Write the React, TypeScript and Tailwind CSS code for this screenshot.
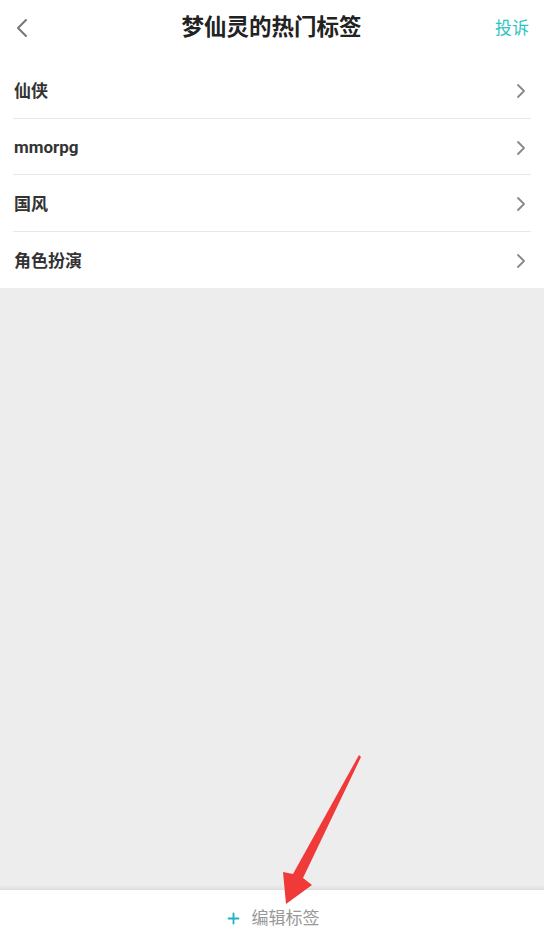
import { ChevronLeft, ChevronRight, Plus } from "lucide-react"

const tags = ["仙侠", "mmorpg", "国风", "角色扮演"]

export default function App() {
    return (
        <div
            className="relative flex h-[936px] w-[544px] flex-col bg-[#ededed] text-[#333]"
            style={{ fontFamily: 'Roboto, "Noto Sans CJK SC", sans-serif' }}
        >
            <header className="flex h-[56px] items-center justify-between bg-white pl-[6px] pr-[8px]">
                <ChevronLeft className="h-[32px] w-[32px] text-[#777]" strokeWidth={1.5} />
                <h1 className="ml-[10px] text-[22.5px] font-bold text-[#222]">梦仙灵的热门标签</h1>
                <span className="pr-[7px] pt-[2px] text-[17px] text-[#2ec4c4]">投诉</span>
            </header>

            <ul className="bg-white px-[13px] pt-[6px]">
                {tags.map((tag, i) => (
                    <li
                        key={tag}
                        className={
                            "flex h-[56.5px] items-center justify-between pt-[3px] " +
                            (i < tags.length - 1 ? "border-b border-[#e8e8e8]" : "")
                        }
                    >
                        <span className="pl-[1px] text-[17px] font-bold text-[#333]">{tag}</span>
                        <ChevronRight className="mr-[-2px] h-[24px] w-[24px] text-[#888]" strokeWidth={1.8} />
                    </li>
                ))}
            </ul>

            <div className="flex-1" />

            <footer className="flex h-[47px] items-center justify-center gap-[10px] border-t border-[#dcdcdc] bg-white pt-[11px] shadow-[0_-2px_3px_rgba(0,0,0,0.05)]">
                <Plus className="h-[17px] w-[17px] text-[#1fb3c4]" strokeWidth={2.6} />
                <span className="text-[17px] text-[#999]">编辑标签</span>
            </footer>

            {/* red annotation arrow */}
            <svg
                className="pointer-events-none absolute left-0 top-0"
                width="544"
                height="936"
                viewBox="0 0 544 936"
            >
                <polygon
                    points="359,755 361,757 303,878 312,885 286,904 283,872 293,874"
                    fill="#f03a3a"
                />
            </svg>
        </div>
    )
}
